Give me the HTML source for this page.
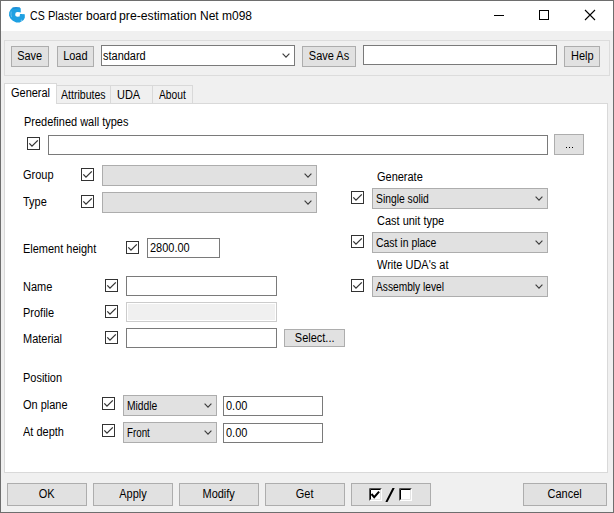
<!DOCTYPE html>
<html><head><meta charset="utf-8">
<style>
*{box-sizing:border-box;margin:0;padding:0}
html,body{width:614px;height:513px;overflow:hidden;background:#f0f0f0}
body{position:relative;font-family:"Liberation Sans",sans-serif;font-size:12px;color:#000}
.a{position:absolute}
.t{position:absolute;white-space:nowrap;font-size:12px;line-height:13px;transform:scaleX(0.915);transform-origin:0 0}
.btn{position:absolute;background:#e1e1e1;border:1px solid #adadad;text-align:center;font-size:12px;line-height:13px;white-space:nowrap}
.btn span{display:inline-block;transform:scaleX(0.915)}
.tb{position:absolute;background:#fff;border:1px solid #7a7a7a}
.cmb{position:absolute;background:#e1e1e1;border:1px solid #adadad}
.cb{position:absolute;width:13px;height:13px;border:1px solid #333}
.cb svg{position:absolute;left:-1px;top:-1px}
.chev{position:absolute;width:8px;height:6px}
</style></head><body>
<div class="a" style="left:0;top:0;width:614px;height:513px;border:1px solid #6e6e6e"></div>
<div class="a" style="left:1px;top:1px;width:612px;height:30px;background:#fff"></div>
<svg class="a" style="left:7px;top:5px" width="20" height="20" viewBox="7 5 20 20">
<path d="M12.5 7.5L16 6.9L19.6 7.4L20.7 8.6L20.8 12.4L19.6 12.3L17.5 11.9L15.8 12.4L15.2 14.2L15.5 16.1L17.2 16.8L19.6 16.5L20 14.1L22 13.9L23 14.2L24 13.9L24.8 14.6L24.8 17.8L23.6 19.9L21.3 21.4L19.6 22.6L16.2 22.4L12.8 20.8L10.4 18.6L9 15.4L9.2 12.2L10.5 9.7Z" fill="#1ea0e2"/>
<path d="M12.8 7.4L16 6.9L19.6 7.3L20.4 8.3L16.5 8.5L13.2 9Z" fill="#1a6fc4" opacity="0.45"/>
<path d="M11.2 11.5Q10.6 14.5 11.6 17.2" fill="none" stroke="#fff" stroke-width="0.7" opacity="0.45"/>
<path d="M20.8 20.6L21.8 20.1" fill="none" stroke="#fff" stroke-width="0.9" opacity="0.7"/>
</svg>
<div class="a" style="left:30px;top:9px;font-size:12px;line-height:14px;white-space:nowrap;transform:scaleX(0.88);transform-origin:0 0">CS</div>
<div class="a" style="left:48px;top:9px;font-size:12px;line-height:14px;white-space:nowrap;transform:scaleX(0.92);transform-origin:0 0">Plaster</div>
<div class="a" style="left:86px;top:9px;font-size:12px;line-height:14px;white-space:nowrap;transform:scaleX(1.0);transform-origin:0 0">board</div>
<div class="a" style="left:119px;top:9px;font-size:12px;line-height:14px;white-space:nowrap;transform:scaleX(1.02);transform-origin:0 0">pre-estimation</div>
<div class="a" style="left:200px;top:9px;font-size:12px;line-height:14px;white-space:nowrap;transform:scaleX(1.0);transform-origin:0 0">Net</div>
<div class="a" style="left:222px;top:9px;font-size:12px;line-height:14px;white-space:nowrap;transform:scaleX(1.0);transform-origin:0 0">m098</div>
<div class="a" style="left:494px;top:15px;width:10px;height:1px;background:#000"></div>
<div class="a" style="left:539px;top:10px;width:10px;height:10px;border:1px solid #000"></div>
<svg class="a" style="left:584px;top:9px" width="12" height="12" viewBox="0 0 12 12"><path d="M1 1L11 11M11 1L1 11" stroke="#000" stroke-width="1.1"/></svg>
<div class="a" style="left:4px;top:40px;width:606px;height:36px;border:1px solid #dcdcdc"></div>
<div class="btn" style="left:11px;top:46px;width:38px;height:21px;padding-top:3px"><span>Save</span></div>
<div class="btn" style="left:57px;top:46px;width:37px;height:21px;padding-top:3px"><span>Load</span></div>
<div class="tb" style="left:101px;top:45px;width:194px;height:21px"></div>
<div class="t" style="left:103px;top:50px;">standard</div>
<svg class="chev" style="left:282px;top:53px" viewBox="0 0 8 6"><path d="M0.6 0.6L4 4.1L7.4 0.6" fill="none" stroke="#3c3c3c" stroke-width="1.15"/></svg>
<div class="btn" style="left:302px;top:46px;width:54px;height:21px;padding-top:3px"><span>Save As</span></div>
<div class="tb" style="left:363px;top:45px;width:194px;height:20px"></div>
<div class="btn" style="left:564px;top:46px;width:36px;height:21px;padding-top:3px"><span>Help</span></div>
<div class="a" style="left:4px;top:103px;width:604px;height:370px;background:#fff;border:1px solid #d9d9d9"></div>
<div class="a" style="left:56px;top:85px;width:55px;height:19px;background:#f0f0f0;border:1px solid #d9d9d9"></div>
<div class="a" style="left:110px;top:85px;width:43px;height:19px;background:#f0f0f0;border:1px solid #d9d9d9"></div>
<div class="a" style="left:152px;top:85px;width:41px;height:19px;background:#f0f0f0;border:1px solid #d9d9d9"></div>
<div class="a" style="left:4px;top:83px;width:53px;height:21px;background:#fff;border:1px solid #d9d9d9;border-bottom:none"></div>
<div class="a" style="left:5px;top:103px;width:51px;height:1px;background:#fff"></div>
<div class="t" style="left:11px;top:87px;">General</div>
<div class="t" style="left:61px;top:89px;transform:scaleX(0.88);">Attributes</div>
<div class="t" style="left:117px;top:89px;">UDA</div>
<div class="t" style="left:159px;top:89px;transform:scaleX(0.855);">About</div>
<div class="t" style="left:24px;top:116px;">Predefined wall types</div>
<div class="cb" style="left:27px;top:137px"><svg width="13" height="13" viewBox="0 0 13 13"><path d="M2.3 6.4L5 9.1L10.8 3.4" fill="none" stroke="#333" stroke-width="1.3"/></svg></div>
<div class="tb" style="left:48px;top:135px;width:500px;height:20px"></div>
<div class="btn" style="left:554px;top:134px;width:30px;height:21px"></div>
<div class="a" style="left:566px;top:147px;width:1px;height:1px;background:#000"></div><div class="a" style="left:569px;top:147px;width:1px;height:1px;background:#000"></div><div class="a" style="left:572px;top:147px;width:1px;height:1px;background:#000"></div>
<div class="t" style="left:23px;top:169px;">Group</div>
<div class="cb" style="left:81px;top:168px"><svg width="13" height="13" viewBox="0 0 13 13"><path d="M2.3 6.4L5 9.1L10.8 3.4" fill="none" stroke="#333" stroke-width="1.3"/></svg></div>
<div class="cmb" style="left:102px;top:165px;width:215px;height:21px"></div>
<svg class="chev" style="left:304px;top:173px" viewBox="0 0 8 6"><path d="M0.6 0.6L4 4.1L7.4 0.6" fill="none" stroke="#3c3c3c" stroke-width="1.15"/></svg>
<div class="t" style="left:23px;top:196px;">Type</div>
<div class="cb" style="left:81px;top:195px"><svg width="13" height="13" viewBox="0 0 13 13"><path d="M2.3 6.4L5 9.1L10.8 3.4" fill="none" stroke="#333" stroke-width="1.3"/></svg></div>
<div class="cmb" style="left:102px;top:192px;width:215px;height:21px"></div>
<svg class="chev" style="left:304px;top:200px" viewBox="0 0 8 6"><path d="M0.6 0.6L4 4.1L7.4 0.6" fill="none" stroke="#3c3c3c" stroke-width="1.15"/></svg>
<div class="t" style="left:377px;top:171px;">Generate</div>
<div class="cb" style="left:351px;top:191px"><svg width="13" height="13" viewBox="0 0 13 13"><path d="M2.3 6.4L5 9.1L10.8 3.4" fill="none" stroke="#333" stroke-width="1.3"/></svg></div>
<div class="cmb" style="left:372px;top:188px;width:176px;height:21px"></div>
<svg class="chev" style="left:535px;top:196px" viewBox="0 0 8 6"><path d="M0.6 0.6L4 4.1L7.4 0.6" fill="none" stroke="#3c3c3c" stroke-width="1.15"/></svg>
<div class="t" style="left:376px;top:193px;transform:scaleX(0.86);">Single solid</div>
<div class="t" style="left:377px;top:215px;">Cast unit type</div>
<div class="cb" style="left:351px;top:235px"><svg width="13" height="13" viewBox="0 0 13 13"><path d="M2.3 6.4L5 9.1L10.8 3.4" fill="none" stroke="#333" stroke-width="1.3"/></svg></div>
<div class="cmb" style="left:372px;top:232px;width:176px;height:21px"></div>
<svg class="chev" style="left:535px;top:240px" viewBox="0 0 8 6"><path d="M0.6 0.6L4 4.1L7.4 0.6" fill="none" stroke="#3c3c3c" stroke-width="1.15"/></svg>
<div class="t" style="left:376px;top:237px;transform:scaleX(0.87);">Cast in place</div>
<div class="t" style="left:377px;top:259px;">Write UDA's at</div>
<div class="cb" style="left:351px;top:279px"><svg width="13" height="13" viewBox="0 0 13 13"><path d="M2.3 6.4L5 9.1L10.8 3.4" fill="none" stroke="#333" stroke-width="1.3"/></svg></div>
<div class="cmb" style="left:372px;top:276px;width:176px;height:21px"></div>
<svg class="chev" style="left:535px;top:284px" viewBox="0 0 8 6"><path d="M0.6 0.6L4 4.1L7.4 0.6" fill="none" stroke="#3c3c3c" stroke-width="1.15"/></svg>
<div class="t" style="left:376px;top:281px;transform:scaleX(0.85);">Assembly level</div>
<div class="t" style="left:23px;top:243px;">Element height</div>
<div class="cb" style="left:126px;top:241px"><svg width="13" height="13" viewBox="0 0 13 13"><path d="M2.3 6.4L5 9.1L10.8 3.4" fill="none" stroke="#333" stroke-width="1.3"/></svg></div>
<div class="tb" style="left:147px;top:238px;width:73px;height:20px"></div>
<div class="t" style="left:150px;top:242px;">2800.00</div>
<div class="t" style="left:23px;top:281px;">Name</div>
<div class="cb" style="left:105px;top:279px"><svg width="13" height="13" viewBox="0 0 13 13"><path d="M2.3 6.4L5 9.1L10.8 3.4" fill="none" stroke="#333" stroke-width="1.3"/></svg></div>
<div class="tb" style="left:126px;top:276px;width:151px;height:20px"></div>
<div class="t" style="left:23px;top:307px;">Profile</div>
<div class="cb" style="left:105px;top:305px"><svg width="13" height="13" viewBox="0 0 13 13"><path d="M2.3 6.4L5 9.1L10.8 3.4" fill="none" stroke="#333" stroke-width="1.3"/></svg></div>
<div class="a" style="left:126px;top:302px;width:151px;height:20px;border:1px solid #cccccc;background:#f0f0f0;box-shadow:inset 0 0 0 1px #fff"></div>
<div class="t" style="left:23px;top:333px;">Material</div>
<div class="cb" style="left:105px;top:331px"><svg width="13" height="13" viewBox="0 0 13 13"><path d="M2.3 6.4L5 9.1L10.8 3.4" fill="none" stroke="#333" stroke-width="1.3"/></svg></div>
<div class="tb" style="left:126px;top:328px;width:151px;height:20px"></div>
<div class="btn" style="left:284px;top:329px;width:61px;height:18px;padding-top:2px"><span>Select...</span></div>
<div class="t" style="left:23px;top:372px;">Position</div>
<div class="t" style="left:23px;top:399px;">On plane</div>
<div class="cb" style="left:102px;top:397px"><svg width="13" height="13" viewBox="0 0 13 13"><path d="M2.3 6.4L5 9.1L10.8 3.4" fill="none" stroke="#333" stroke-width="1.3"/></svg></div>
<div class="cmb" style="left:123px;top:395px;width:94px;height:21px"></div>
<svg class="chev" style="left:204px;top:403px" viewBox="0 0 8 6"><path d="M0.6 0.6L4 4.1L7.4 0.6" fill="none" stroke="#3c3c3c" stroke-width="1.15"/></svg>
<div class="t" style="left:127px;top:400px;transform:scaleX(0.858);">Middle</div>
<div class="tb" style="left:223px;top:396px;width:100px;height:20px"></div>
<div class="t" style="left:226px;top:400px;">0.00</div>
<div class="t" style="left:23px;top:426px;">At depth</div>
<div class="cb" style="left:102px;top:424px"><svg width="13" height="13" viewBox="0 0 13 13"><path d="M2.3 6.4L5 9.1L10.8 3.4" fill="none" stroke="#333" stroke-width="1.3"/></svg></div>
<div class="cmb" style="left:123px;top:422px;width:94px;height:21px"></div>
<svg class="chev" style="left:204px;top:430px" viewBox="0 0 8 6"><path d="M0.6 0.6L4 4.1L7.4 0.6" fill="none" stroke="#3c3c3c" stroke-width="1.15"/></svg>
<div class="t" style="left:127px;top:427px;transform:scaleX(0.815);">Front</div>
<div class="tb" style="left:223px;top:423px;width:100px;height:20px"></div>
<div class="t" style="left:226px;top:427px;">0.00</div>
<div class="btn" style="left:7px;top:483px;width:80px;height:23px;padding-top:4px"><span>OK</span></div>
<div class="btn" style="left:93px;top:483px;width:80px;height:23px;padding-top:4px"><span>Apply</span></div>
<div class="btn" style="left:179px;top:483px;width:80px;height:23px;padding-top:4px"><span>Modify</span></div>
<div class="btn" style="left:265px;top:483px;width:80px;height:23px;padding-top:4px"><span>Get</span></div>
<div class="btn" style="left:351px;top:483px;width:80px;height:23px"></div>
<svg class="a" style="left:369px;top:488px" width="44" height="14" viewBox="0 0 44 14">
<rect x="0" y="0" width="13" height="13" fill="#fff"/>
<path d="M12.5 0V12.5H0" fill="none" stroke="#fff"/>
<path d="M11.5 1V11.5H1" fill="none" stroke="#e3e3e3"/>
<path d="M0.5 12.5V0.5H12.5" fill="none" stroke="#555"/>
<path d="M1.5 11.5V1.5H11.5" fill="none" stroke="#000"/>
<path d="M2.5 6L5.2 9.2L10.1 3.6" fill="none" stroke="#000" stroke-width="2"/>
<path d="M17.6 13.6L24.6 0" fill="none" stroke="#000" stroke-width="2" stroke-linecap="round"/>
<rect x="30" y="0" width="13" height="13" fill="#fff"/>
<path d="M42.5 0V12.5H30" fill="none" stroke="#fff"/>
<path d="M41.5 1V11.5H31" fill="none" stroke="#e3e3e3"/>
<path d="M30.5 12.5V0.5H42.5" fill="none" stroke="#555"/>
<path d="M31.5 11.5V1.5H41.5" fill="none" stroke="#000"/>
</svg>
<div class="btn" style="left:523px;top:483px;width:84px;height:23px;padding-top:4px"><span>Cancel</span></div>
</body></html>
